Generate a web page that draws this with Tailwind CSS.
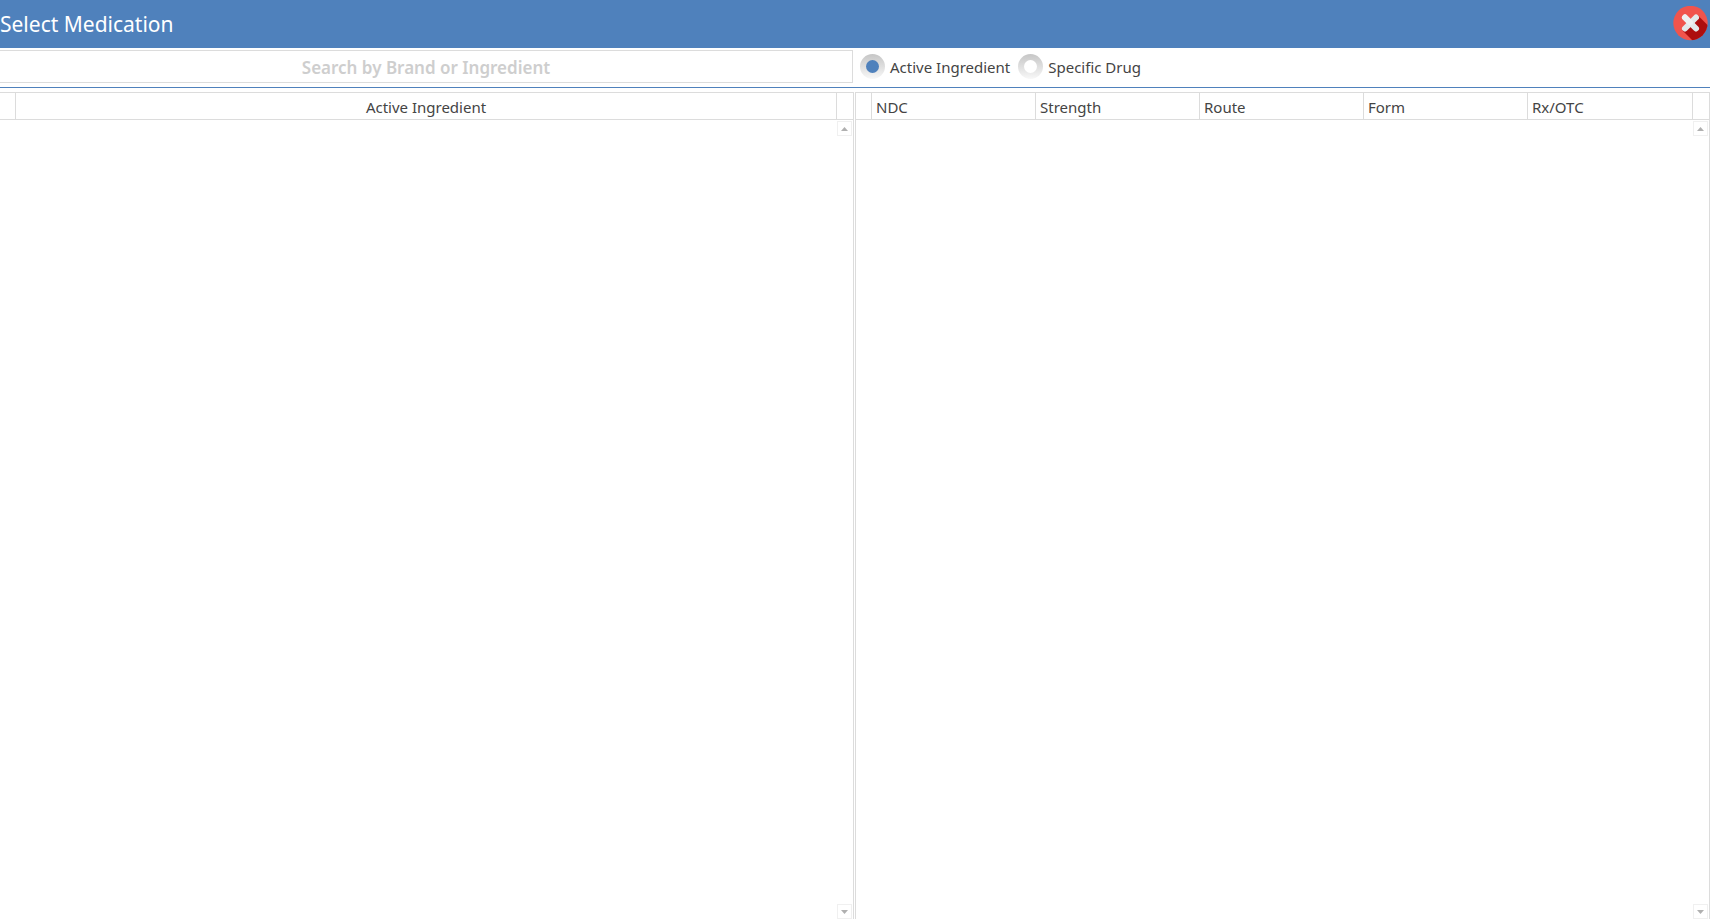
<!DOCTYPE html>
<html lang="en">
<head>
  <meta charset="UTF-8">
  <meta name="viewport" content="width=device-width, initial-scale=1">
  <title>Select Medication</title>
  <script src="https://cdn.jsdelivr.net/npm/@tailwindcss/browser@4"></script>
</head>
<body class="flex h-screen flex-col overflow-hidden bg-white font-['Segoe_UI','Noto_Sans',sans-serif] text-[15px] text-[#444]">
  <header class="flex h-12 shrink-0 items-center justify-between bg-[#4f81bc] pr-0.5 text-white">
    <h1 class="text-[21px] leading-7">Select Medication</h1>
    <button type="button" aria-label="Close" class="size-9">
      <svg viewBox="0 0 36 36" class="size-9">
        <defs>
          <clipPath id="disc"><circle cx="18.5" cy="17" r="17.2"/></clipPath>
        </defs>
        <circle cx="18.5" cy="17" r="17.2" fill="#f1544c"/>
        <path clip-path="url(#disc)" fill="#ad0e0e" d="M10.5 24.5 L26 9.5 L42 25.5 V42 H28 Z"/>
        <path d="M24 11.5 L13 22.5" stroke="#e3e9ea" stroke-width="6" stroke-linecap="round"/>
        <path d="M13 11.5 L24 22.5" stroke="#e3e9ea" stroke-width="6" stroke-linecap="round"/>
        <path d="M13 11.5 L18 16.5" stroke="#eef1f1" stroke-width="6" stroke-linecap="round"/>
      </svg>
    </button>
  </header>

  <form class="flex shrink-0 items-center border-b border-[#4f81bc] pt-0.5 pb-1" onsubmit="return false">
    <div class="w-1/2 pr-0.5">
      <input type="text" aria-label="Search by Brand or Ingredient" placeholder="Search by Brand or Ingredient" class="block h-[33px] w-full border border-l-0 border-[#dcdcdc] pt-0.5 text-center text-[17px] font-semibold outline-none placeholder:text-[#cecece]">
    </div>
    <div class="flex items-center gap-2 pl-[5px]">
      <label class="flex items-center gap-[5px]">
        <input type="radio" name="mode" checked class="size-[25px] appearance-none rounded-full bg-linear-to-b from-[#c6c6c6] to-[#f8f8f8] p-1.5 before:block before:size-[13px] before:rounded-full before:bg-white checked:before:bg-[#4f81bc]">
        <span class="pt-0.5">Active Ingredient</span>
      </label>
      <label class="flex items-center gap-[5px]">
        <input type="radio" name="mode" class="size-[25px] appearance-none rounded-full bg-linear-to-b from-[#c6c6c6] to-[#f8f8f8] p-1.5 before:block before:size-[13px] before:rounded-full before:bg-white checked:before:bg-[#4f81bc]">
        <span class="pt-0.5">Specific Drug</span>
      </label>
    </div>
  </form>

  <main class="flex min-h-0 flex-1 pt-1">
    <div class="w-1/2 pr-px">
      <section class="flex h-full flex-col border-t border-r border-[#dcdcdc]">
        <table class="w-full table-fixed border-separate border-spacing-0 leading-6">
          <thead>
            <tr class="h-[27px]">
              <td class="w-4 border-r border-b border-[#dcdcdc] p-0"></td>
              <th class="border-r border-b border-[#dcdcdc] px-0 pt-0.5 pb-0 font-normal">Active Ingredient</th>
              <td class="w-4 border-b border-[#dcdcdc] p-0"></td>
            </tr>
          </thead>
        </table>
        <!-- scroll track -->
        <div class="flex flex-1 flex-col items-end justify-between pt-px pr-px">
          <button type="button" aria-label="Scroll up" class="flex size-[15px] items-center justify-center border border-[#f0f0f0]">
            <svg viewBox="0 0 7 4" class="h-1 w-[7px]" fill="#b0b0b0"><path d="M3.5 0 L7 4 H0 Z"/></svg>
          </button>
          <button type="button" aria-label="Scroll down" class="flex size-[15px] items-center justify-center border border-[#f0f0f0]">
            <svg viewBox="0 0 7 4" class="h-1 w-[7px]" fill="#b0b0b0"><path d="M0 0 H7 L3.5 4 Z"/></svg>
          </button>
        </div>
      </section>
    </div>

    <section class="flex w-1/2 flex-col border-x border-t border-[#dcdcdc]">
      <table class="w-full table-fixed border-separate border-spacing-0 text-left leading-6">
        <thead>
          <tr class="h-[27px]">
            <td class="w-4 border-r border-b border-[#dcdcdc] p-0"></td>
            <th class="w-[164px] border-r border-b border-[#dcdcdc] pt-0.5 pr-0 pb-0 pl-1 font-normal">NDC</th>
            <th class="w-[164px] border-r border-b border-[#dcdcdc] pt-0.5 pr-0 pb-0 pl-1 font-normal">Strength</th>
            <th class="w-[164px] border-r border-b border-[#dcdcdc] pt-0.5 pr-0 pb-0 pl-1 font-normal">Route</th>
            <th class="w-[164px] border-r border-b border-[#dcdcdc] pt-0.5 pr-0 pb-0 pl-1 font-normal">Form</th>
            <th class="border-r border-b border-[#dcdcdc] pt-0.5 pr-0 pb-0 pl-1 font-normal">Rx/OTC</th>
            <td class="w-4 border-b border-[#dcdcdc] p-0"></td>
          </tr>
        </thead>
      </table>
      <div class="flex flex-1 flex-col items-end justify-between pt-px pr-px">
        <button type="button" aria-label="Scroll up" class="flex size-[15px] items-center justify-center border border-[#f0f0f0]">
          <svg viewBox="0 0 7 4" class="h-1 w-[7px]" fill="#b0b0b0"><path d="M3.5 0 L7 4 H0 Z"/></svg>
        </button>
        <button type="button" aria-label="Scroll down" class="flex size-[15px] items-center justify-center border border-[#f0f0f0]">
          <svg viewBox="0 0 7 4" class="h-1 w-[7px]" fill="#b0b0b0"><path d="M0 0 H7 L3.5 4 Z"/></svg>
        </button>
      </div>
    </section>
  </main>
</body>
</html>
